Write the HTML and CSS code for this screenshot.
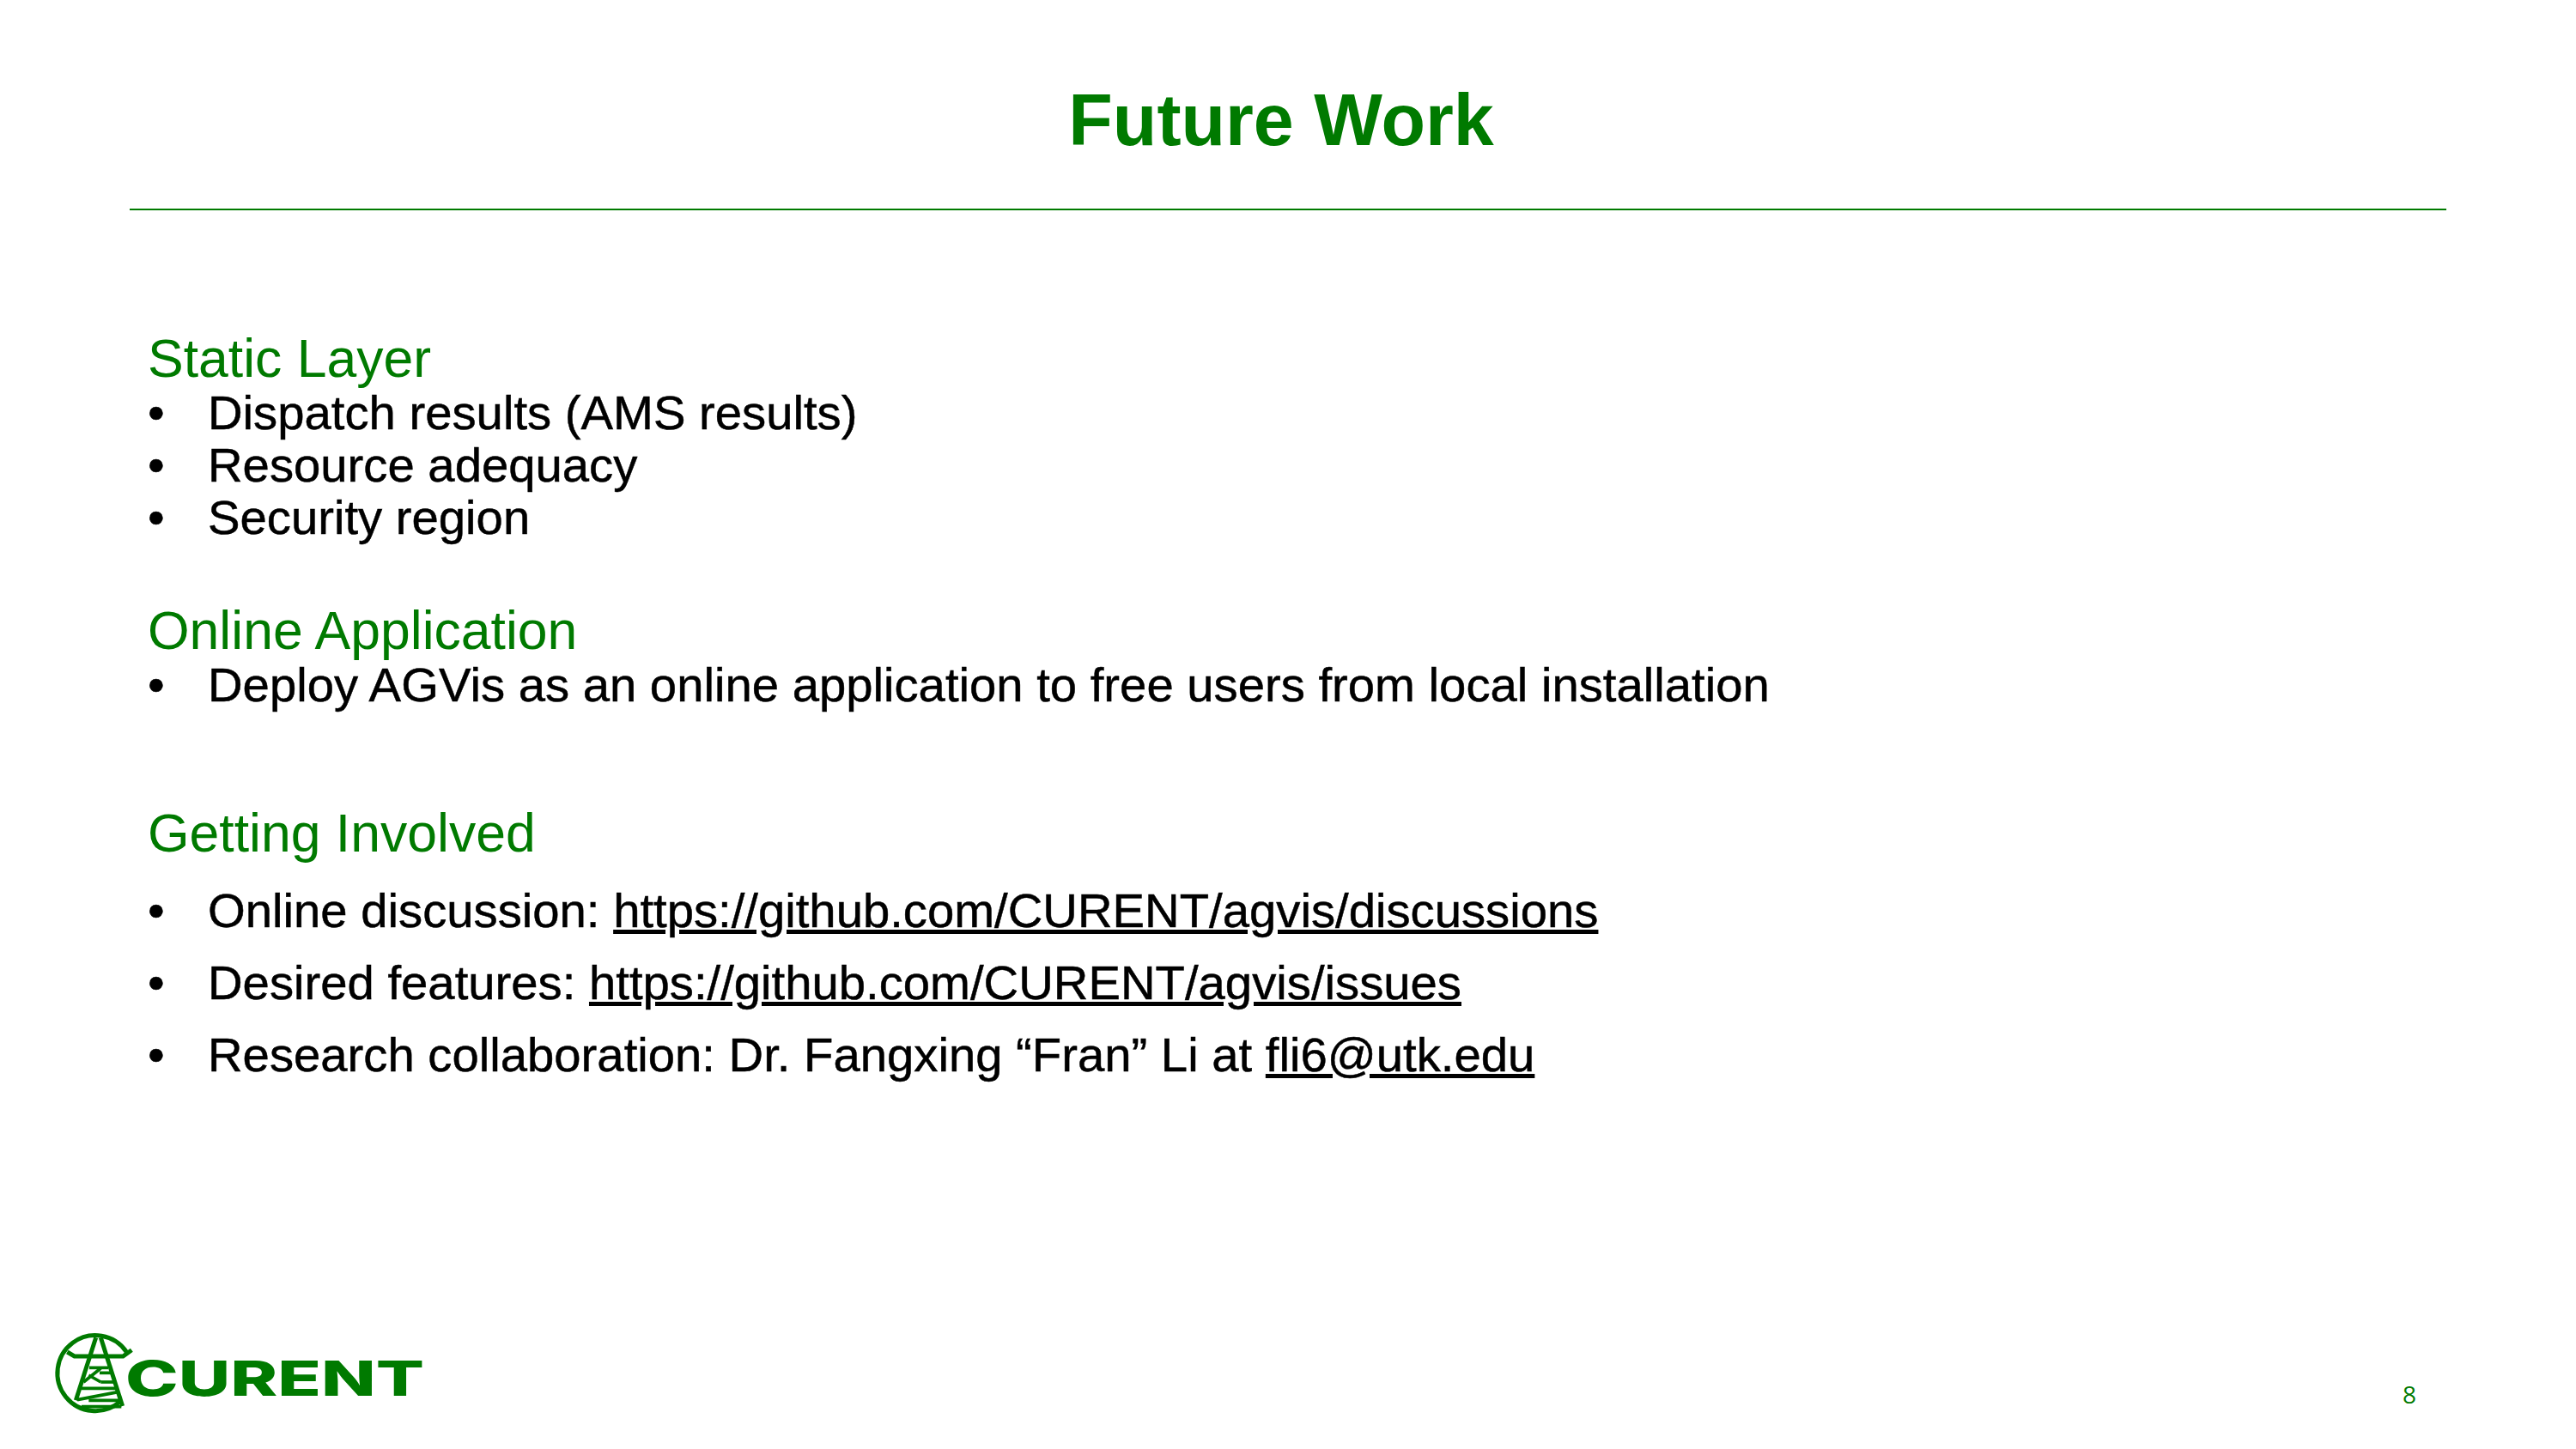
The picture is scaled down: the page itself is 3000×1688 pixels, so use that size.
FILE: index.html
```html
<!DOCTYPE html>
<html lang="en">
<head>
  <meta charset="UTF-8" />
  <title>Future Work</title>
  <link rel="stylesheet" href="styles.css">
</head>
<body>
  <div class="slide">
    <header class="slide-head">
      <h1>Future Work</h1>
    </header>

    <main class="slide-body">
      <section class="block block-static">
        <h2>Static Layer</h2>
        <ul>
          <li>Dispatch results (AMS results)</li>
          <li>Resource adequacy</li>
          <li>Security region</li>
        </ul>
      </section>

      <section class="block block-online">
        <h2>Online Application</h2>
        <ul>
          <li>Deploy AGVis as an online application to free users from local installation</li>
        </ul>
      </section>

      <section class="block block-involved">
        <h2>Getting Involved</h2>
        <ul class="spaced">
          <li><span>Online discussion: <a href="#">https://github.com/CURENT/agvis/discussions</a></span></li>
          <li><span>Desired features: <a href="#">https://github.com/CURENT/agvis/issues</a></span></li>
          <li><span>Research collaboration: Dr. Fangxing “Fran” Li at <a href="#">fli6@utk.edu</a></span></li>
        </ul>
      </section>
    </main>

    <footer class="slide-foot">
      <svg class="logo" viewBox="0 0 1440 450" width="480" height="150" role="img" aria-label="CURENT">
        <g class="logo-lines">
          <path class="ring" d="M322 135 A132 132 0 1 0 300 308" />
          <path class="arm" d="M115 135 L140 150 H310 L340 128" />
          <path d="M215 85 L145 304" />
          <path d="M232 85 L308 324" />
          <path class="thin" d="M192 190 H258" />
          <path class="thin" d="M172 240 L232 192 M190 216 L232 240" />
          <path class="thin" d="M228 208 H268" />
          <path class="thin" d="M232 240 H278" />
          <path class="thin" d="M165 262 H288" />
          <path class="thin" d="M150 302 L296 274" />
          <path class="thin" d="M190 304 H302" />
          <path class="thin" d="M165 326 H304" />
        </g>
        <text class="wordmark" x="318" y="288" textLength="1044" lengthAdjust="spacingAndGlyphs">CURENT</text>
      </svg>
      <span class="page-num">8</span>
    </footer>
  </div>
</body>
</html>
```

FILE: styles.css
```css
:root {
  --verde: #007a00;
}

* {
  box-sizing: border-box;
  margin: 0;
  padding: 0;
}

body {
  background: #fff;
  color: #000;
  font-family: "Liberation Sans", Arial, sans-serif;
}

.slide {
  width: 3000px;
  height: 1688px;
  display: flex;
  flex-direction: column;
  overflow: hidden;
}

.slide-head {
  margin: 0 151px;
  height: 245px;
  padding-top: 92px;
  padding-right: 16px;
  border-bottom: 2px solid var(--verde);
}

h1 {
  color: var(--verde);
  font-size: 84.4px;
  line-height: 96px;
  font-weight: 700;
  text-align: center;
}

.slide-body {
  flex: 1;
  padding-left: 172px;
}

h2 {
  color: var(--verde);
  font-size: 62.5px;
  line-height: 66px;
  font-weight: 400;
}

ul {
  list-style: none;
}

li {
  display: flex;
  font-size: 56.25px;
  line-height: 61px;
  -webkit-text-stroke: 0.5px #000;
}

li::before {
  content: "•";
  width: 70px;
  flex-shrink: 0;
}

a {
  color: #000;
  text-decoration: underline;
}

.block-static {
  margin-top: 139px;
}

.block-online {
  margin-top: 68px;
}

.block-involved {
  margin-top: 109px;
}

.spaced {
  margin-top: 27px;
}

.spaced li {
  margin-bottom: 23px;
}

.slide-foot {
  display: flex;
  justify-content: space-between;
  align-items: flex-start;
  height: 158px;
  padding-left: 40px;
  padding-right: 186px;
}

.logo {
  display: block;
}

.logo-lines path {
  fill: none;
  stroke: var(--verde);
  stroke-width: 15;
}

.logo-lines .thin {
  stroke-width: 11;
}

.wordmark {
  fill: var(--verde);
  font-family: Inter, sans-serif;
  font-weight: 800;
  font-size: 169px;
}

.page-num {
  margin-top: 76px;
  color: var(--verde);
  font-family: "Open Sans", sans-serif;
  font-size: 28px;
  line-height: 36px;
}
```
